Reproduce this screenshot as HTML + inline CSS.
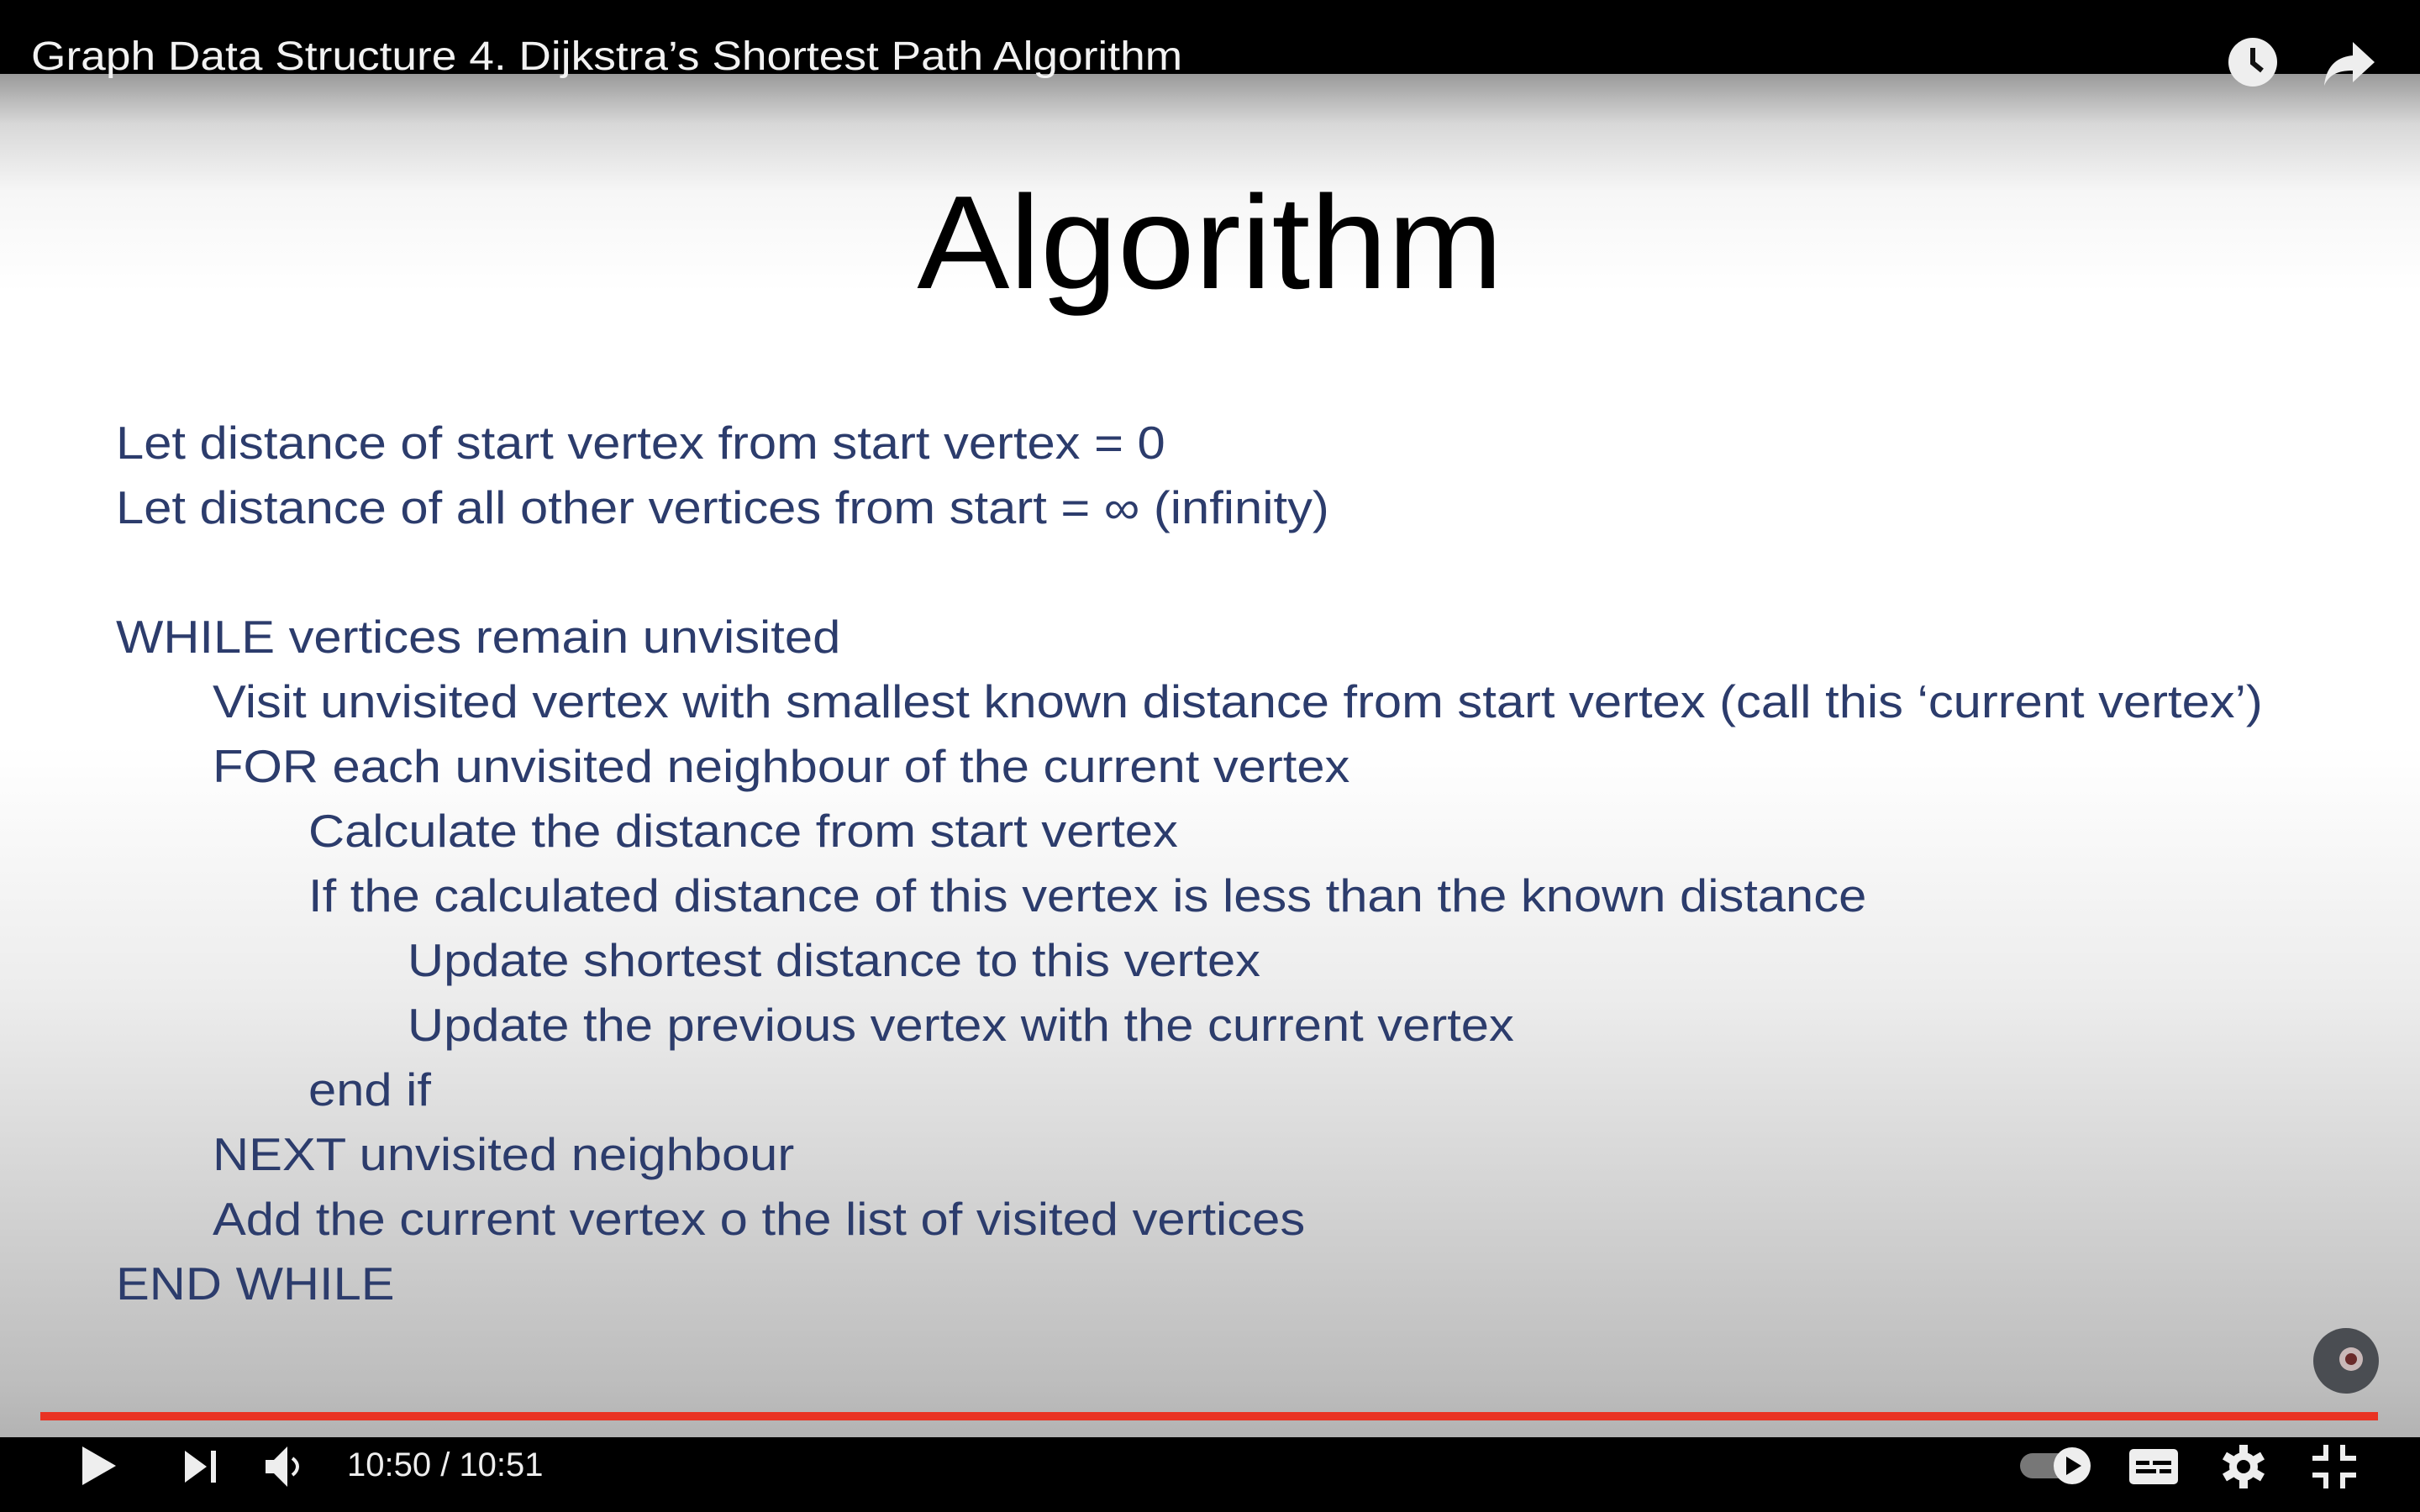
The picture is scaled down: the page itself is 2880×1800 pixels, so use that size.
<!DOCTYPE html>
<html><head><meta charset="utf-8"><style>
html,body{margin:0;padding:0;width:2880px;height:1800px;overflow:hidden;background:#000;}
#slide{position:absolute;left:0;top:88px;width:2880px;height:1623px;
background:linear-gradient(to bottom,#9a9a9a 0px,#d8d8d8 60px,#f6f6f6 140px,#ffffff 260px,#ffffff 800px,#ececec 1100px,#d2d2d2 1350px,#bdbdbd 1560px,#b3b3b3 1623px);}
#topbar{position:absolute;left:0;top:0;width:2880px;height:88px;background:#000;}
#title{position:absolute;left:37px;top:40px;font:48px "Liberation Sans",sans-serif;color:#f2f2f2;white-space:nowrap;transform-origin:left;transform:scaleX(1.11);}
#h{position:absolute;left:0;width:2880px;top:210px;text-align:center;font:158px "Liberation Sans",sans-serif;color:#000;line-height:1;transform:scaleX(1.045);}
.l{position:absolute;font:55px "Liberation Sans",sans-serif;color:#2c3c6c;white-space:nowrap;line-height:1;transform-origin:left;transform:scaleX(1.085);}
#bar{position:absolute;left:0;top:1711px;width:2880px;height:89px;background:#000;}
#prog{position:absolute;left:48px;top:1681px;width:2782px;height:10px;background:#e93323;}
#time{position:absolute;left:413px;top:1722px;font:40px "Liberation Sans",sans-serif;color:#eee;}
svg{position:absolute;}
</style></head><body>
<div id="slide"></div>
<div id="topbar"></div>
<div id="title">Graph Data Structure 4. Dijkstra’s Shortest Path Algorithm</div>
<svg style="left:2650px;top:43px" width="62" height="62" viewBox="0 0 62 62"><circle cx="31" cy="31" r="29" fill="#eee"/><path d="M31 14 V32 L42 41" stroke="#111" stroke-width="6" fill="none"/></svg>
<svg style="left:2764px;top:48px" width="64" height="56" viewBox="0 0 64 56"><path d="M36 2 L62 26 L36 50 V36 C20 36 8 40 2 54 C4 34 14 20 36 18 Z" fill="#eee"/></svg>
<div id="h">Algorithm</div>
<div class="l" style="left:138px;top:500px">Let distance of start vertex from start vertex = 0</div>
<div class="l" style="left:138px;top:577px">Let distance of all other vertices from start = ∞ (infinity)</div>
<div class="l" style="left:138px;top:731px">WHILE vertices remain unvisited</div>
<div class="l" style="left:253px;top:808px">Visit unvisited vertex with smallest known distance from start vertex (call this ‘current vertex’)</div>
<div class="l" style="left:253px;top:885px">FOR each unvisited neighbour of the current vertex</div>
<div class="l" style="left:367px;top:962px">Calculate the distance from start vertex</div>
<div class="l" style="left:367px;top:1039px">If the calculated distance of this vertex is less than the known distance</div>
<div class="l" style="left:485px;top:1116px">Update shortest distance to this vertex</div>
<div class="l" style="left:485px;top:1193px">Update the previous vertex with the current vertex</div>
<div class="l" style="left:367px;top:1270px">end if</div>
<div class="l" style="left:253px;top:1347px">NEXT unvisited neighbour</div>
<div class="l" style="left:253px;top:1424px">Add the current vertex o the list of visited vertices</div>
<div class="l" style="left:138px;top:1501px">END WHILE</div>
<svg style="left:2752px;top:1580px" width="80" height="80" viewBox="0 0 80 80"><circle cx="40" cy="40" r="39" fill="#4a4d52"/><circle cx="46" cy="38" r="14" fill="#c9b8b8"/><circle cx="46" cy="38" r="7" fill="#6a2a2a"/></svg>
<div id="prog"></div>
<div id="bar"></div>
<svg style="left:96px;top:1722px" width="46" height="46" viewBox="0 0 46 46"><path d="M2 0 L42 23 L2 46 Z" fill="#eee"/></svg>
<svg style="left:220px;top:1727px" width="40" height="38" viewBox="0 0 40 38"><path d="M0 0 L26 19 L0 38 Z" fill="#eee"/><rect x="31" y="0" width="6" height="38" fill="#eee"/></svg>
<svg style="left:316px;top:1722px" width="46" height="48" viewBox="0 0 46 48"><path d="M0 16 H10 L26 0 V48 L10 32 H0 Z" fill="#eee"/><path d="M32 14 C40 20 40 28 32 34" stroke="#eee" stroke-width="4" fill="none"/></svg>
<div id="time">10:50 / 10:51</div>
<svg style="left:2404px;top:1722px" width="86" height="46" viewBox="0 0 86 46"><rect x="0" y="8" width="60" height="30" rx="15" fill="#777"/><circle cx="62" cy="23" r="22" fill="#eee"/><path d="M55 12 L73 23 L55 34 Z" fill="#000"/></svg>
<svg style="left:2534px;top:1725px" width="58" height="42" viewBox="0 0 58 42"><rect x="0" y="0" width="58" height="42" rx="5" fill="#eee"/><rect x="8" y="14" width="16" height="5" fill="#000"/><rect x="28" y="14" width="22" height="5" fill="#000"/><rect x="8" y="24" width="24" height="5" fill="#000"/><rect x="36" y="24" width="14" height="5" fill="#000"/></svg>
<svg style="left:2644px;top:1720px" width="52" height="52" viewBox="0 0 52 52"><g fill="#eee"><circle cx="26" cy="26" r="17"/><rect x="21" y="0" width="10" height="52"/><rect x="21" y="0" width="10" height="52" transform="rotate(60 26 26)"/><rect x="21" y="0" width="10" height="52" transform="rotate(120 26 26)"/></g><circle cx="26" cy="26" r="8" fill="#000"/></svg>
<svg style="left:2752px;top:1720px" width="52" height="52" viewBox="0 0 52 52"><g stroke="#eee" stroke-width="6" fill="none"><path d="M16 0 V16 H0"/><path d="M36 0 V16 H52"/><path d="M0 36 H16 V52"/><path d="M52 36 H36 V52"/></g></svg>
</body></html>
